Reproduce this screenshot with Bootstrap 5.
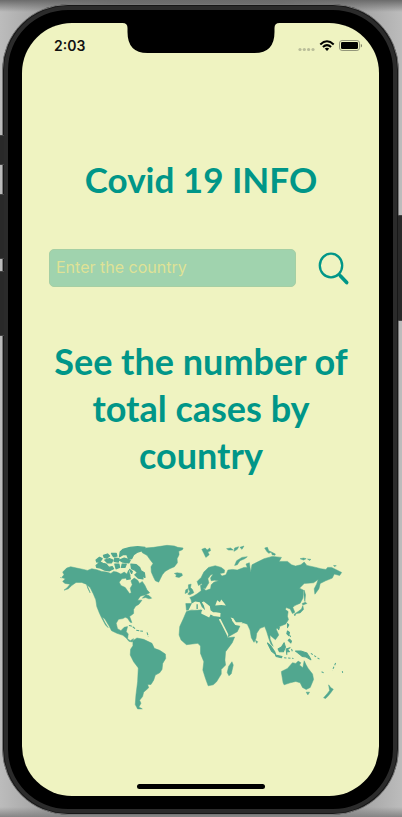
<!DOCTYPE html>
<html lang="en">
<head>
<meta charset="utf-8">
<meta name="viewport" content="width=device-width, initial-scale=1">
<title>Covid 19 INFO</title>
<link href="https://cdn.jsdelivr.net/npm/bootstrap@5.3.0/dist/css/bootstrap.min.css" rel="stylesheet">
<style>
  :root { --paper: #eff3c1; --teal: #009688; --land: #51a78f; }
  body {
    font-family: Lato, "Open Sans", sans-serif; color: var(--teal);
    background: linear-gradient(#6b6b6b, transparent 12px, transparent calc(100% - 10px), #858585),
      linear-gradient(90deg, #bcbcbc, #777 30%, #777 70%, #bcbcbc);
    padding: 4px 3px 2px 2px;
  }
  .handset { background: #000; border: 1px solid #777; border-radius: 66px; padding: 18px 19px 18px 19px;
    box-shadow: inset 0 0 0 1px #171717, inset 0 0 0 5px #2b2b2b; }
  .display { background: var(--paper); border-radius: 50px; }
  .side-key { position: absolute; width: 4px; background: #292929; border: 1px solid #444; border-width: 1px 0; }
  .key-mute { left: -3px; top: 130px; height: 30px; }
  .key-up { left: -3px; top: 189px; height: 65px; }
  .key-down { left: -3px; top: 266px; height: 65px; }
  .key-power { right: -4px; top: 210px; height: 106px; }
  .status { height: 46px; padding: 0 17px 0 32px; }
  .clock { font: 600 14px/16px Inter, sans-serif; color: #111; }
  .notch { position: absolute; top: -1px; left: 50%; width: 157px; height: 32px; transform: translateX(-50%); }
  .app-body { padding: 0 26px 0 27px; }
  .title { font-size: 35px; line-height: 48px; font-weight: 700; margin-top: 86px; margin-bottom: 46px; }
  .search { gap: 19px; }
  .country-box, .country-box:focus {
    height: 38px; padding: 0 6px 2px; border: 1px solid #a5cfa4; border-radius: 5px;
    background: #a0d3ae; color: var(--teal); font: 400 16px/24px Inter, sans-serif;
  }
  .country-box::placeholder { color: #dfe296; opacity: 1; }
  .find { width: 36px; height: 37px; margin-right: 2px; }
  .tagline { font-size: 36px; line-height: 47px; font-weight: 700; margin: 51px -10px 65px; }
  .world { padding: 0 8px 0 11px; }
  .home-bar { width: 128px; height: 5px; background: #000; margin-bottom: 7px; }
</style>
<script src="https://cdn.jsdelivr.net/npm/bootstrap@5.3.0/dist/js/bootstrap.bundle.min.js"></script>
</head>
<body class="d-flex min-vh-100">
<div class="handset position-relative d-flex flex-grow-1">
  <span class="side-key key-mute"></span>
  <span class="side-key key-up"></span>
  <span class="side-key key-down"></span>
  <span class="side-key key-power"></span>
  <div class="display position-relative d-flex flex-column flex-grow-1">
    <svg class="notch" viewBox="0 0 157 32" aria-hidden="true"><path d="M0 0H157V1Q152 1 152 6V10Q152 31 132 31H25Q5 31 5 10V6Q5 1 0 1Z"/></svg>
    <header class="status d-flex align-items-center justify-content-between">
      <span class="clock">2:03</span>
      <svg width="64" height="14" viewBox="0 0 64 14" role="img" aria-label="Wi-Fi and battery">
        <g fill="#b9bd99"><circle cx="2" cy="10.500" r="1.600"/><circle cx="6.300" cy="10.500" r="1.600"/><circle cx="10.600" cy="10.500" r="1.600"/><circle cx="15" cy="10.500" r="1.600"/></g>
        <g fill="none" stroke="#000" stroke-width="2"><path d="M22.300 5.400Q29 -.800 35.700 5.400"/><path d="M24.900 8Q29 4.200 33.100 8"/></g>
        <path d="M26.700 9.600Q29 7.800 31.300 9.600L29 12Z"/>
        <rect x="41.500" y="1.500" width="20" height="10" rx="2.600" fill="none" stroke="#93967a"/>
        <rect x="43" y="3" width="17" height="7" rx="1.300"/>
        <path d="M62.800 5V8.500Q64 8 64 6.700T62.800 5Z" fill="#777a62"/>
      </svg>
    </header>
    <main class="app-body flex-grow-1 text-center">
      <h1 class="title">Covid 19 INFO</h1>
      <form class="search d-flex align-items-center">
        <input class="country-box form-control flex-grow-1" id="country" type="text" placeholder="Enter the country" aria-label="Country">
        <button class="find btn border-0 p-0 flex-shrink-0" type="button" aria-label="Search">
          <svg class="d-block" width="36" height="37" viewBox="0 0 36 37" fill="none" stroke="#009688" stroke-linecap="round"><ellipse cx="16" cy="15.500" rx="11.200" ry="11.800" stroke-width="2.300"/><path d="M24 24.500L25 25.700" stroke-width="2.500"/><path d="M25.500 26L31.700 32.600" stroke-width="3.600"/></svg>
        </button>
      </form>
      <h2 class="tagline">See the number of total cases by country</h2>
      <div class="world">
        <svg class="d-block w-100" viewBox="30 28 852 500" role="img" aria-label="World map">
          <g fill="#51a78f" stroke="#51a78f" stroke-width="1.500" stroke-linejoin="round">
            <!-- North and Central America -->
            <path d="M38 112L50 100 62 96 80 100 100 104 112 107 125 102 140 105 155 110 170 112 182 116 190 110 200 112 212 118 222 112 230 118 235 106 240 122 230 130 215 132 207 142 212 152 225 158 232 168 238 176 243 174 240 160 246 150 242 138 252 130 262 136 268 146 276 140 284 152 290 165 298 174 286 180 270 184 262 196 275 196 266 208 256 214 250 224 250 236 238 245 245 263 240 262 232 250 225 247 218 251 205 253 198 265 202 281 212 287 222 277 232 275 228 290 234 297 232 311 240 317 250 311 246 321 236 319 228 309 218 301 200 295 184 287 176 272 164 252 156 246 164 262 174 278 166 270 154 248 148 235 140 215 137 195 130 178 120 158 108 148 95 143 78 143 65 152 55 162 42 166 52 158 60 148 45 146 38 140 46 132 35 128 42 120Z"/>
            <path d="M28 126L34 130M110 150L118 168 120 174 113 160ZM276 190L286 180 296 182 304 190 296 192 286 188Z"/>
            <!-- Arctic archipelago -->
            <path stroke-width="4" d="M138 92L150 82 158 86 168 88 176 98 186 96 190 102 178 108 164 106 152 100 140 98ZM138 76L148 68 156 72 150 80 140 82ZM160 62L172 58 178 64 170 70 162 68ZM164 76L178 72 188 76 184 84 172 84ZM184 56L198 56 200 64 190 66ZM194 70L206 72 204 82 192 80ZM210 52L218 44 240 38 262 36 284 38 280 46 262 52 250 60 244 72 234 70 230 60 218 60 208 66ZM208 76L222 70 240 76 236 84 218 82ZM194 88L206 88 208 98 198 102ZM216 88L228 88 224 98 214 98ZM242 88L258 90 268 98 272 108 282 114 284 128 274 124 278 132 264 130 254 120 262 114 254 106 244 102ZM238 104L246 110 244 116ZM228 124L238 122 240 132 230 134Z"/>
            <!-- Greenland and Iceland -->
            <path d="M274 48L286 40 310 38 350 32 372 34 382 38 398 40 396 45 385 50 386 60 380 72 381 84 372 96 358 102 344 110 336 120 330 132 325 142 315 138 309 126 303 112 302 96 308 86 300 76 290 62 276 54ZM372 116L380 114 394 116 396 122 386 128 376 126 378 120Z"/>
            <!-- South America -->
            <path d="M248 317L260 309 280 313 305 325 312 340 328 346 345 357 346 370 337 385 335 403 328 413 315 420 310 435 302 448 292 448 295 458 280 471 277 484 268 495 272 504 266 515 276 521 262 521 255 508 257 480 262 440 264 400 263 397 250 380 240 360 241 343 248 332Z"/>
            <!-- Europe and Asia -->
            <path d="M406 206L424 206 422 195 418 188 428 184 440 177 452 168 450 152 456 149 460 162 466 167 480 162 482 150 490 142 504 138 492 136 482 138 480 130 488 118 480 121 472 132 475 144 464 162 458 158 454 146 444 152 440 140 452 128 460 112 474 98 494 93 512 98 522 106 521 114 508 116 514 124 526 120 532 106 546 104 560 106 580 98 590 98 586 88 596 84 600 112 604 90 620 82 640 72 665 65 692 68 685 80 710 80 722 90 734 94 750 90 760 82 768 92 795 98 810 102 825 104 830 98 842 98 862 108 872 113 866 122 850 118 844 130 824 138 808 146 804 162 792 178 790 162 797 148 802 134 788 144 760 146 746 160 758 166 756 190 748 205 732 212 726 218 732 232 725 236 718 222 706 218 704 224 712 230 710 244 713 254 705 267 686 275 676 282 684 300 674 314 664 306 658 300 658 312 667 334 660 326 654 310 648 290 642 275 628 280 618 295 616 310 610 322 602 308 598 285 590 268 580 264 555 264 545 250 544 258 555 270 568 273 560 290 532 306 524 290 508 256 490 240 470 250 440 218 420 225 408 226Z"/>
            <!-- British Isles, Svalbard, Novaya Zemlya and Arctic islands -->
            <path d="M414 150L422 148 420 158 426 164 430 174 418 180 412 178 418 170 414 162ZM406 165L412 162 412 172 404 176ZM454 44L464 40 470 46 478 40 480 48 472 52 476 60 466 68 460 56ZM528 42L540 40 548 46 534 46ZM552 40L564 36 560 44 550 50ZM568 38L580 34 574 44ZM552 92L558 78 574 68 590 66 582 72 568 78 560 90ZM642 40L650 38 654 48 662 52 654 56 648 50ZM662 52L674 58 672 62 664 60ZM748 72L758 70 766 72 758 76ZM770 73L780 74 776 77ZM848 92L856 93 850 95Z"/>
            <!-- Africa and Madagascar -->
            <path d="M408 230L420 227 450 225 455 237 480 243 508 245 505 255 520 280 532 308 552 306 545 323 525 350 523 375 525 390 512 403 512 417 498 440 488 449 473 452 465 430 457 405 460 380 450 355 450 333 442 325 425 327 408 329 392 315 386 300 388 275 398 253ZM544 380L548 390 542 416 535 422 530 412 534 394Z"/>
            <!-- Sakhalin, Japan, Sri Lanka -->
            <path d="M760 166L764 180 762 200 759 180ZM754 206L764 202 768 206 756 210ZM756 212L758 224 748 234 736 236 732 243 730 238 742 230 752 222ZM614 316L621 320 618 325Z"/>
            <!-- South-east Asia and New Guinea -->
            <path stroke-width="3" d="M650 324L660 332 672 350 675 359 662 348ZM674 360L694 364 692 368 676 364ZM682 342L692 336 700 323 704 336 698 350 686 350ZM706 342L718 338 710 344 716 350 708 350 708 358ZM734 348L750 348 768 354 776 366 780 374 766 366 754 364 742 354ZM710 266L714 270 710 278ZM710 288L716 292 714 302 708 296ZM716 312L722 318 720 324 712 316ZM680 278L686 276 684 284Z"/>
            <path fill="none" stroke-width="3" stroke-dasharray="7 5" d="M700 368L728 370M722 342L726 352M716 300L722 310M780 355L808 374M812 410L820 414M854 384L844 406M874 408L875 413"/>
            <!-- Australia, Tasmania and New Zealand -->
            <path d="M692 413L692 409 710 400 725 383 735 385 742 378 750 383 746 390 756 398 760 377 766 390 772 400 785 417 788 433 778 457 766 463 755 457 748 443 735 439 718 443 700 449 697 443ZM766 471L776 471 771 479ZM833 449L840 458 847 462 840 472 832 482 824 490 818 488 830 474 836 466Z"/>
            <!-- Caribbean -->
            <path fill="none" stroke-width="3" d="M236 272Q246 272 255 282M258 286L278 289M290 292L294 304" stroke-dasharray="9 3"/>
          </g>
          <!-- Inland seas -->
          <g fill="#eff3c1">
            <path d="M424 206L434 200 448 202 454 216 464 226 460 212 454 202 460 200 478 214 480 226 488 232 496 232 510 234 509 246 490 243 480 239 476 248 464 242 452 236 454 226 436 222 414 226Z"/>
            <path d="M494 212L500 196 508 202 512 194 520 204 526 212 512 210ZM505 252L510 252 533 298 532 306 520 282ZM540 248L548 250 556 262 576 262 568 272 554 270Z"/>
          </g>
          <path fill="#51a78f" d="M438 208h4v14h-4zM448 224l8 1-4 4z"/>
        </svg>
      </div>
    </main>
    <footer class="d-flex justify-content-center"><span class="home-bar rounded-pill"></span></footer>
  </div>
</div>
</body>
</html>
